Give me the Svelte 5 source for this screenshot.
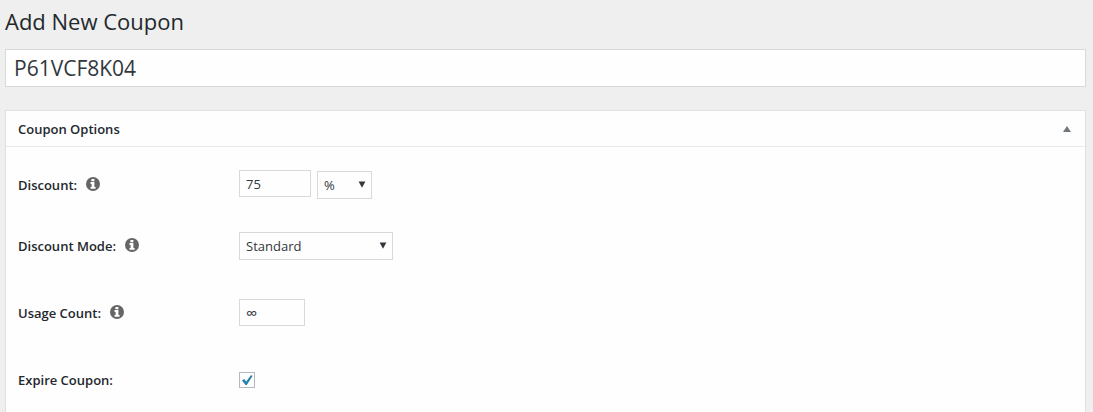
<script>
  let title = 'P61VCF8K04';
  let discount = '75';
  let unit = '%';
  let mode = 'Standard';
  let usage = '∞';
  let expire = true;
  let open = true;
</script>

{#snippet info(text)}
  <button type="button" class="info" aria-label={text}>
    <svg viewBox="0 0 14 14" width="14" height="14">
      <circle cx="7" cy="7" r="7" fill="#666" />
      <path d="M5.4 1.9h3v2.3h-3zM4.5 5.1h3.9v4.9h1.2v1.8H4.5V10h1.1V6.9H4.5z" fill="#fff" />
    </svg>
  </button>
{/snippet}

{#snippet arrow()}
  <svg class="arrow" viewBox="0 0 8 7" width="8" height="7">
    <path d="M0.6 0.4h6.8L4 6.8z" fill="#32373c" />
  </svg>
{/snippet}

<div class="wrap">
  <h1>Add New Coupon</h1>
  <input class="title" type="text" aria-label="Coupon code" bind:value={title} />

  <section class="postbox">
    <header>
      <h2>Coupon Options</h2>
      <button type="button" class="toggle" aria-label="Toggle panel" on:click={() => (open = !open)}>
        <svg viewBox="0 0 8 6" width="8" height="6"><path d="M4 0l4 6H0z" fill="#72777c" /></svg>
      </button>
    </header>

    {#if open}
      <div class="inside">
        <div class="row first">
          <div class="name">
            <label for="discount">Discount:</label>
            {@render info('About the discount')}
          </div>
          <div class="field">
            <input id="discount" class="amount" type="text" bind:value={discount} />
            <span class="select unit">
              <select aria-label="Discount unit" bind:value={unit}>
                <option>%</option>
                <option>$</option>
              </select>
              {@render arrow()}
            </span>
          </div>
        </div>

        <div class="row">
          <div class="name">
            <label for="mode">Discount Mode:</label>
            {@render info('About the discount mode')}
          </div>
          <div class="field">
            <span class="select mode">
              <select id="mode" bind:value={mode}>
                <option>Standard</option>
              </select>
              {@render arrow()}
            </span>
          </div>
        </div>

        <div class="row">
          <div class="name">
            <label for="usage">Usage Count:</label>
            {@render info('About the usage count')}
          </div>
          <div class="field">
            <input id="usage" class="count" type="text" bind:value={usage} />
          </div>
        </div>

        <div class="row">
          <div class="name">
            <label for="expire">Expire Coupon:</label>
          </div>
          <div class="field check">
            <input id="expire" type="checkbox" bind:checked={expire} />
            {#if expire}
              <svg class="tick" viewBox="0 0 16 16" width="16" height="16">
                <path d="M3 8.4l2.2-1.5 2 2.5 4.6-6.2 1.9.6-5.9 9.2H6.5z" fill="#2583ae" />
              </svg>
            {/if}
          </div>
        </div>
      </div>
    {/if}
  </section>
</div>

<style>
  :global(body) {
    background: #efefef;
  }

  .wrap {
    box-sizing: border-box;
    min-height: 100vh;
    display: flex;
    flex-direction: column;
    padding: 5px 7px 0 5px;
    font-family: "Open Sans", "Segoe UI", sans-serif;
    font-size: 13px;
    color: #23282d;
  }

  h1 {
    margin: 0 0 12px;
    font-size: 22px;
    font-weight: 400;
    line-height: 32px;
  }

  input,
  select {
    box-sizing: border-box;
    margin: 0;
    border: 1px solid #d9d9d9;
    border-radius: 0;
    background: #fefefe;
    font-family: inherit;
    font-size: 13px;
    color: #32373c;
    outline: 0;
  }

  .title {
    width: 100%;
    height: 38px;
    margin-bottom: 23px;
    padding: 0 8px;
    font-size: 21px;
  }

  .postbox {
    flex: 1;
    border: 1px solid #e0e0e0;
    border-bottom: 0;
    background: #fefefe;
  }

  header {
    display: flex;
    align-items: center;
    justify-content: space-between;
    height: 35px;
    padding: 0 14px 0 12px;
    border-bottom: 1px solid #eaeaea;
  }

  h2 {
    margin: 0;
    font-size: 13px;
    font-weight: 600;
  }

  .toggle,
  .info {
    display: flex;
    padding: 0;
    border: 0;
    background: none;
    cursor: pointer;
  }

  .info {
    margin-bottom: 2px;
  }

  .inside {
    padding: 23px 12px 0;
  }

  .row {
    display: grid;
    grid-template-columns: 221px 1fr;
    height: 28px;
    margin-bottom: 39px;
  }

  .row:last-child {
    margin-bottom: 0;
  }

  .row.first {
    height: 29px;
    margin-bottom: 33px;
  }

  .name {
    display: flex;
    align-items: center;
    gap: 9px;
    font-weight: 600;
  }

  .field {
    display: flex;
    align-items: flex-start;
    gap: 6px;
  }

  .field.check {
    position: relative;
    align-items: center;
  }

  .amount,
  .count {
    height: 27px;
    padding: 0 6px;
  }

  .amount {
    width: 72px;
  }

  .count {
    width: 66px;
    font-size: 16px;
  }

  .select {
    position: relative;
    align-self: flex-end;
    height: 28px;
  }

  .select select {
    width: 100%;
    height: 28px;
    padding: 0 20px 0 6px;
    appearance: none;
  }

  .select.unit {
    width: 55px;
  }

  .select.mode {
    width: 154px;
  }

  .arrow {
    position: absolute;
    top: 10px;
    right: 6px;
    pointer-events: none;
  }

  input[type="checkbox"] {
    width: 16px;
    height: 16px;
    border-color: #b4b9be;
    appearance: none;
  }

  .tick {
    position: absolute;
    left: 0;
    pointer-events: none;
  }
</style>
